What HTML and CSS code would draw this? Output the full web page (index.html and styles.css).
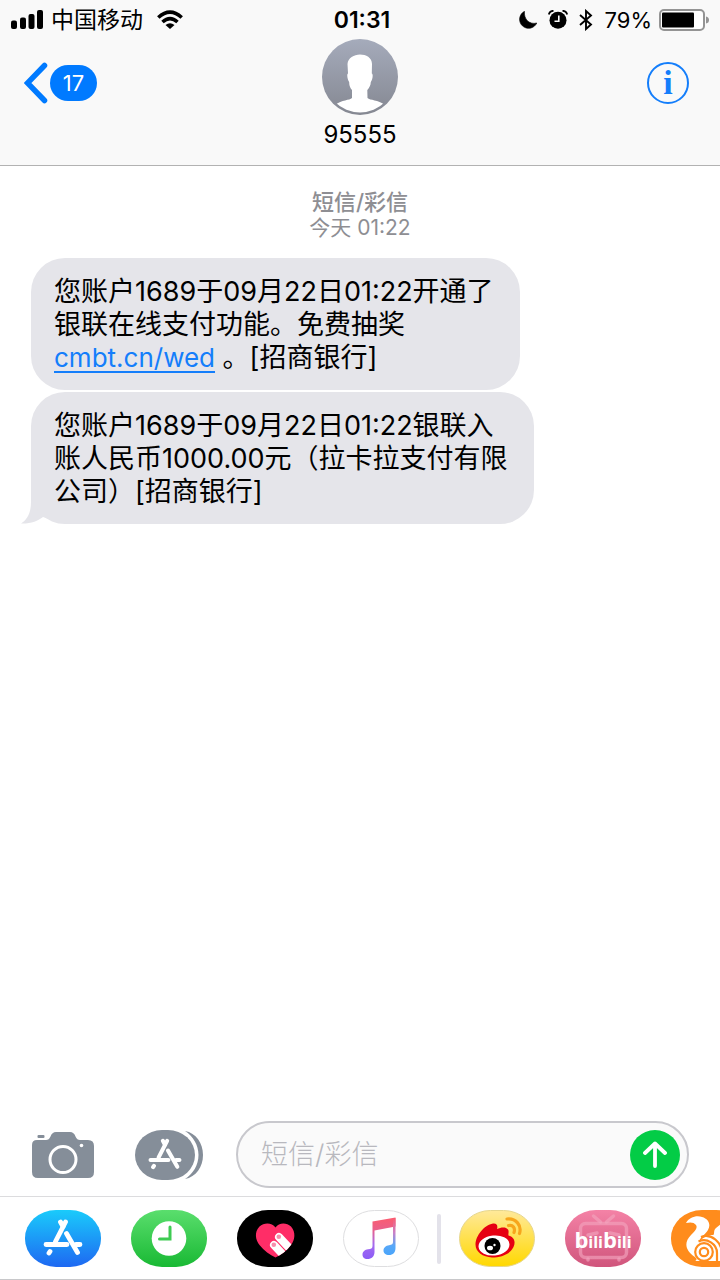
FILE: index.html
```html
<!DOCTYPE html>
<html lang="zh-CN">
<head>
<meta charset="utf-8">
<meta name="viewport" content="width=device-width, initial-scale=1">
<title>95555</title>
<link rel="stylesheet" href="styles.css">
</head>
<body>
<svg class="defs" aria-hidden="true">
  <defs>
    <linearGradient id="g-store" x1="0" y1="0" x2="0" y2="1"><stop offset="0" stop-color="#1acbfb"/><stop offset="1" stop-color="#1e68f2"/></linearGradient>
    <linearGradient id="g-green" x1="0" y1="0" x2="0" y2="1"><stop offset="0" stop-color="#5ade6d"/><stop offset="1" stop-color="#19b934"/></linearGradient>
    <linearGradient id="g-yellow" x1="0" y1="0" x2="0" y2="1"><stop offset="0" stop-color="#ffe99a"/><stop offset="1" stop-color="#ffd800"/></linearGradient>
    <linearGradient id="g-pink" x1="0" y1="0" x2="0" y2="1"><stop offset="0" stop-color="#f482a6"/><stop offset="1" stop-color="#d0557c"/></linearGradient>
    <linearGradient id="g-note" gradientUnits="userSpaceOnUse" x1="0" y1="8" x2="0" y2="49"><stop offset="0" stop-color="#fb5c70"/><stop offset=".3" stop-color="#e8608c"/><stop offset=".65" stop-color="#a56af0"/><stop offset="1" stop-color="#8b5cf6"/></linearGradient>
    <linearGradient id="g-note2" gradientUnits="userSpaceOnUse" x1="0" y1="8" x2="0" y2="45"><stop offset="0" stop-color="#fb5c70"/><stop offset=".4" stop-color="#c981c8"/><stop offset=".75" stop-color="#58a8f8"/><stop offset="1" stop-color="#4aa5fb"/></linearGradient>
    <linearGradient id="g-avatar" x1="0" y1="0" x2="0" y2="1"><stop offset="0" stop-color="#a5abbb"/><stop offset="1" stop-color="#858892"/></linearGradient>
    <clipPath id="c-avatar"><circle cx="38" cy="38" r="35.5"/></clipPath>
    <clipPath id="c-heart"><path id="p-heart" d="M38.500 17.500C35 12.500 27 12.500 22.500 16.500C17 22 18.500 30 22.500 35C27 40.500 33 45 38.500 47.500C44 45 50 40.500 54 35C58 30 59 22 54 16.500C49.500 12.500 42 12.500 38.500 17.500Z"/></clipPath>
    <symbol id="store-mark" viewBox="0 0 40 37">
      <g fill="none" stroke="currentColor" stroke-width="4.800" stroke-linecap="round">
        <path d="M22.500 3 12.500 22.500"/><path d="M17.500 3 20 7.500M23.500 14.500 34.500 33.500"/><path d="M3 25.500H24M33 25.500H37"/><path d="M7 32.500 6 34"/>
      </g>
    </symbol>
  </defs>
</svg>

<div class="screen">
  <header class="header">
    <div class="status">
      <div class="status-side">
        <svg class="signal" viewBox="0 0 32 19" aria-hidden="true"><rect y="10.500" width="6" height="8.500" rx="2"/><rect x="9" y="7.500" width="6" height="11.500" rx="2"/><rect x="17.500" y="4" width="6" height="15" rx="2"/><rect x="26" width="6" height="19" rx="2"/></svg>
        <span class="carrier">中国移动</span>
        <svg class="wifi" viewBox="0 0 26 19" aria-hidden="true"><g fill="none" stroke="#000" stroke-width="3.600"><path d="M1.300 7.500Q13-3.300 24.700 7.500"/><path d="M5.500 12Q13 5.300 20.500 12"/></g><path d="M8.500 15Q13 11.500 17.500 15L13 19Z"/></svg>
      </div>
      <span class="clock">01:31</span>
      <div class="status-side status-right">
        <svg class="moon" viewBox="0 0 18 18" aria-hidden="true"><path d="M5.500.3A9 9 0 1 0 17.800 12C10.500 14 4.500 8 5.500.3Z" stroke="#000" stroke-width=".6"/></svg>
        <svg class="alarm" viewBox="0 0 20 19" aria-hidden="true"><circle cx="10" cy="10.300" r="8.500"/><path d="M.8 4.500Q1.800.8 5.500.8M14.500.8Q18.200.8 19.200 4.500" fill="none" stroke="#000" stroke-width="1.800"/><path d="M10.800 5.500V11.200H6.500" fill="none" stroke="#fff" stroke-width="1.600"/></svg>
        <svg class="bluetooth" viewBox="0 0 14 22" aria-hidden="true"><path d="M1 6 12 15.500 7 20V2L12 6.500 1 16" fill="none" stroke="#000" stroke-width="1.900"/></svg>
        <span class="percent">79%</span>
        <svg class="battery" viewBox="0 0 50 22" aria-hidden="true"><rect x="1" y="1" width="44" height="20" rx="4" fill="#fff" stroke="#949494" stroke-width="2"/><rect x="3" y="3.500" width="32" height="15" rx="1"/><path d="M47 7.500Q50 8 50 11T47 14.500Z" fill="#949494"/></svg>
      </div>
    </div>
    <nav class="nav">
      <button class="back" type="button" aria-label="返回，17 条未读">
        <svg class="chevron" viewBox="0 0 24 42" aria-hidden="true"><path d="M20.500 3.500 3.500 21 20.500 38.500" fill="none" stroke="#007aff" stroke-width="5.500" stroke-linecap="round"/></svg>
        <span class="unread">17</span>
      </button>
      <div class="contact">
        <svg class="avatar" viewBox="0 0 76 76" aria-hidden="true"><circle cx="38" cy="38" r="38" fill="url(#g-avatar)"/><path clip-path="url(#c-avatar)" fill="#fff" d="M38 15.500C44 15.500 50 18.500 50 25L49.800 34.500C51.500 35 50.500 41 48.800 43C48.800 46.500 47 49 45.300 51L45.500 59C48 61.500 56 60.500 63 66L64 76H12L13 66C20 60.500 27.500 61.500 30 59L30 51C28.500 49 27 46.500 27.200 43C25.500 41 24.500 35 26 34.500L25.500 25C26 19 32 15.500 38 15.500Z"/></svg>
        <h1 class="name">95555</h1>
      </div>
      <button class="info" type="button" aria-label="详细信息">i</button>
    </nav>
  </header>

  <main class="thread">
    <p class="stamp"><strong>短信/彩信</strong><br>今天 <time>01:22</time></p>
    <p class="bubble">您账户1689于09月22日01:22开通了<br>银联在线支付功能。免费抽奖<br><a href="#">cmbt.cn/wed</a> 。[招商银行]</p>
    <p class="bubble bubble-last">您账户1689于09月22日01:22银联入<br>账人民币1000.00元（拉卡拉支付有限<br>公司）[招商银行]
      <svg class="tail" viewBox="0 0 34 36" aria-hidden="true"><path d="M10 0V14C10 25 6 32 0 35.500C9 36 17 33 22 29L34 33V0Z"/></svg>
    </p>
  </main>

  <footer>
    <form class="compose">
      <button class="tool" type="button" aria-label="相机">
        <svg class="camera" viewBox="0 0 62 46" aria-hidden="true"><path fill="#858e99" d="M5 8H14Q17 8 18.500 4.500Q20 0 24 0H38Q42 0 43.500 4.500Q45 8 48 8H56Q62 8 62 14V40Q62 46 56 46H6Q0 46 0 40V13Q0 8 5 8Z"/><rect x="5.500" y="3" width="7" height="3" rx="1" fill="#858e99"/><circle cx="31" cy="27.500" r="13" fill="none" stroke="#fff" stroke-width="3"/><circle cx="49.500" cy="13.500" r="1.800" fill="#fff"/></svg>
      </button>
      <button class="tool" type="button" aria-label="应用">
        <svg class="apps" viewBox="0 0 68 50" aria-hidden="true"><path fill="#858e99" d="M50 1C61 3 68 13 68 25S61 47 50 49C58 44 63.500 35 63.500 25S58 6 50 1Z"/><rect width="60" height="50" rx="27" ry="25" fill="#858e99"/><use href="#store-mark" x="13" y="8" width="34" height="32" color="#fff"/></svg>
      </button>
      <div class="field">
        <input class="message" type="text" aria-label="短信/彩信" placeholder="短信/彩信">
        <button class="send" type="submit" aria-label="发送"><svg class="arrow" viewBox="0 0 24 27" aria-hidden="true"><path d="M12 25V2.500M2 12 12 2.500 22 12" fill="none" stroke="#fff" stroke-width="3.800" stroke-linecap="round" stroke-linejoin="round"/></svg></button>
      </div>
    </form>
    <div class="drawer">
      <div class="group">
        <button class="app" type="button" aria-label="App Store"><svg viewBox="0 0 76 57"><rect width="76" height="57" rx="31" ry="28" fill="url(#g-store)"/><use href="#store-mark" x="18" y="9" width="40" height="37" color="#fff"/></svg></button>
        <button class="app" type="button" aria-label="最近"><svg viewBox="0 0 76 57"><rect width="76" height="57" rx="31" ry="28" fill="url(#g-green)"/><circle cx="38" cy="28.500" r="17.300" fill="#fff"/><path d="M39 17V29H28.500" fill="none" stroke="#3ecb52" stroke-width="3" stroke-linecap="round"/></svg></button>
        <button class="app" type="button" aria-label="Digital Touch"><svg viewBox="0 0 76 57"><rect width="76" height="57" rx="31" ry="28"/><use href="#p-heart" fill="#ff2d67"/><g clip-path="url(#c-heart)"><g fill="#fff"><rect x="-4" y="-4" width="8" height="36" rx="4" transform="translate(42 27) rotate(-43)"/><rect x="-4" y="-4" width="8" height="36" rx="4" transform="translate(37 35) rotate(-43)"/></g></g><g fill="#f88dac"><circle cx="41.800" cy="26.800" r="2.300"/><circle cx="36.800" cy="34.800" r="2.300"/></g></svg></button>
        <button class="app" type="button" aria-label="音乐"><svg viewBox="0 0 76 57"><rect x=".5" y=".5" width="75" height="56" rx="31" ry="28" fill="#fff" stroke="#dedee0"/><path fill="url(#g-note)" d="M29.500 11.500 52.500 7.500V16.500L31.500 20.500V42C31.500 46.500 28.500 49 24.500 49C21 49 19.500 47 19.500 44.500C19.500 41.500 22 39.500 25 39.200C28 38.800 29.500 38.500 29.500 36Z"/><path fill="url(#g-note2)" d="M50 9 52.500 8V38C52.500 42.500 50 45 46 45C42.500 45 40.500 43 40.500 40.500C40.500 37.500 43 35.600 46 35.200C49 34.800 50 34 50 32Z"/></svg></button>
      </div>
      <span class="divider"></span>
      <div class="group">
        <button class="app" type="button" aria-label="微博"><svg viewBox="0 0 76 57"><rect x=".5" y=".5" width="75" height="56" rx="31" ry="28" fill="url(#g-yellow)" stroke="#e6d68c"/><path fill="#e60012" d="M34 13.500C38 13 39 16 38 19C42 17 47 16.500 49 19.500C50.300 21.500 49 24 49.500 25.500C55 27 57 31.500 54.500 37C51 44.500 42 47.500 33 47.500C24 47 16.500 42 16.500 34.500C16.500 26 25 15 34 13.500Z"/><ellipse cx="35" cy="35.500" rx="15.500" ry="10" transform="rotate(-6 35 35.500)" fill="#fff"/><circle cx="33.500" cy="36" r="8"/><ellipse cx="31" cy="38" rx="3" ry="2.300" fill="#fff"/><circle cx="35.500" cy="35" r="1.200" fill="#fff"/><path d="M48 9C57 8 63 15.500 60.500 23.500M49.500 15.500C54 14.500 56.500 18 55 22.500" fill="none" stroke="#f7a61c" stroke-width="3.200" stroke-linecap="round"/></svg></button>
        <button class="app" type="button" aria-label="bilibili"><svg viewBox="0 0 76 57"><rect width="76" height="57" rx="31" ry="28" fill="url(#g-pink)"/><g fill="none" stroke="#f3a3bd" stroke-opacity=".65" stroke-width="3.500" stroke-linecap="round"><rect x="15.500" y="13.500" width="46" height="34" rx="5"/><path d="M28.500 6 35.500 12M48.500 6 41.500 12M23 49V50M54 49V50M23 25 32 23M54 25 45 23"/></g><text class="bili" x="38" y="38" text-anchor="middle"><tspan class="bili-cap">b</tspan>ili<tspan class="bili-cap">b</tspan>ili</text></svg></button>
        <button class="app" type="button" aria-label="UC 浏览器"><svg viewBox="0 0 76 57"><rect width="76" height="57" rx="31" ry="28" fill="#ff8c1c"/><path fill="#fff" d="M15 13C18 7 26 5 31 7C38 9 40 15 37 20C34 25 29 27 28 32C32 27 38 25 42 25C44 25 42 20 45 18L50 14L60 26V51H24C26 50 26 49 24 47C15 41 12 33 20 25C24 21 27 18 25 15C23 12 19 12 15 13Z"/><g fill="none" stroke="#ff8c1c" stroke-width="2.200"><circle cx="33" cy="42" r="8.800"/><circle cx="33" cy="42" r="4.200"/><path d="M27.500 31.500C36 27.500 46 34 46 43V51M30 27C40 23 52 32 51 46"/></g></svg></button>
      </div>
    </div>
  </footer>
</div>
</body>
</html>
```
FILE: styles.css
```css
* { box-sizing: border-box; }

body {
  margin: 0;
  background: #fff;
  color: #000;
  font-family: Inter, "Noto Sans CJK SC", sans-serif;
}

p, h1 { margin: 0; }

button {
  padding: 0;
  border: 0;
  background: none;
  font: inherit;
  cursor: pointer;
}

svg { display: block; flex: none; }

.defs { position: absolute; width: 0; height: 0; }

.screen {
  display: flex;
  flex-direction: column;
  min-height: 100vh;
  overflow: hidden;
}

/* Status bar and navigation */
.header {
  padding-bottom: 15px;
  background: #f9f9f9;
  border-bottom: 1px solid #b2b2b2;
}

.status {
  display: grid;
  grid-template-columns: 1fr auto 1fr;
  align-items: center;
  height: 39px;
  padding: 0 11px;
}

.status-side { display: flex; align-items: center; }
.status-right { justify-content: flex-end; }
.signal { width: 32px; height: 19px; }
.carrier { margin: 0 14px 0 8px; font-size: 23px; line-height: 32px; }
.wifi { width: 26px; height: 19px; }
.clock { padding-left: 4px; font-size: 23px; line-height: 32px; font-weight: 600; }
.moon { width: 18px; height: 18px; margin-right: 11px; }
.alarm { width: 20px; height: 19px; margin-right: 11px; }
.bluetooth { width: 14px; height: 22px; margin-right: 12px; }
.percent { margin-right: 7px; font-size: 22px; line-height: 32px; }
.battery { width: 50px; height: 22px; }

.nav {
  display: grid;
  grid-template-columns: 1fr auto 1fr;
  align-items: start;
  padding: 0 31px 0 24px;
}

.back { display: flex; align-items: center; gap: 2px; justify-self: start; margin-top: 23px; }
.chevron { width: 24px; height: 42px; }

.unread {
  min-width: 47px;
  border-radius: 18px;
  background: #007aff;
  color: #fff;
  font-size: 22px;
  line-height: 36px;
}

.contact { display: flex; flex-direction: column; align-items: center; padding-left: 7px; }
.avatar { width: 76px; height: 76px; }
.name { padding-top: 5px; font-size: 24px; line-height: 30px; font-weight: 400; }

.info {
  justify-self: end;
  width: 42px;
  height: 42px;
  margin-top: 23px;
  border: 2px solid #147efb;
  border-radius: 50%;
  color: #147efb;
  font: bold 34px/36px "Liberation Serif", serif;
}

/* Conversation */
.thread {
  flex: 1;
  display: flex;
  flex-direction: column;
  align-items: flex-start;
  gap: 2px;
  padding: 24px 31px;
}

.stamp {
  align-self: center;
  margin-bottom: 16px;
  color: #8e8e93;
  font-size: 21px;
  line-height: 25px;
  text-align: center;
}

.stamp strong { font-size: 22px; font-weight: 500; }

.bubble {
  position: relative;
  padding: 17px 26px 16px 23px;
  border-radius: 34px;
  background: #e5e5ea;
  font-size: 27px;
  line-height: 33px;
}

.bubble a {
  color: #147efb;
  font-size: 26px;
  text-decoration-thickness: 2px;
  text-underline-offset: 4px;
}

.tail {
  position: absolute;
  bottom: 0;
  left: -10px;
  z-index: -1;
  width: 34px;
  height: 36px;
  fill: #e5e5ea;
}

/* Message entry */
.compose {
  display: flex;
  align-items: center;
  padding: 8px 31px 8px 32px;
}

.tool { margin-right: 41px; }
.tool + .tool { margin-right: 33px; }
.camera { width: 62px; height: 46px; }
.apps { width: 68px; height: 50px; }

.field {
  flex: 1;
  display: flex;
  align-items: center;
  min-width: 0;
  height: 67px;
  padding: 0 7px 0 23px;
  border: 2px solid #c8c8cd;
  border-radius: 34px;
  background: #fafafa;
}

.message {
  flex: 1;
  min-width: 0;
  padding: 0;
  border: 0;
  outline: 0;
  background: none;
  font: 300 27px/40px Inter, "Noto Sans CJK SC", sans-serif;
}

.message::placeholder { color: #b8b8be; opacity: 1; }

.send {
  display: grid;
  place-items: center;
  width: 50px;
  height: 50px;
  border-radius: 50%;
  background: #03cc46;
}

.arrow { width: 24px; height: 27px; }

/* App drawer */
.drawer {
  display: flex;
  align-items: center;
  gap: 18px;
  padding: 13px 0 12px 25px;
  border-top: 1px solid #dcdcde;
  border-bottom: 1px solid #c8c8ca;
  overflow: hidden;
}

.group { display: flex; gap: 30px; }
.app, .app svg { flex: none; width: 76px; height: 57px; }
.divider { flex: none; width: 4px; height: 50px; border-radius: 2px; background: #e3e2ea; }

.bili {
  fill: #fff;
  font: 700 16px "Open Sans", sans-serif;
}

.bili-cap { font-size: 22px; }
```
